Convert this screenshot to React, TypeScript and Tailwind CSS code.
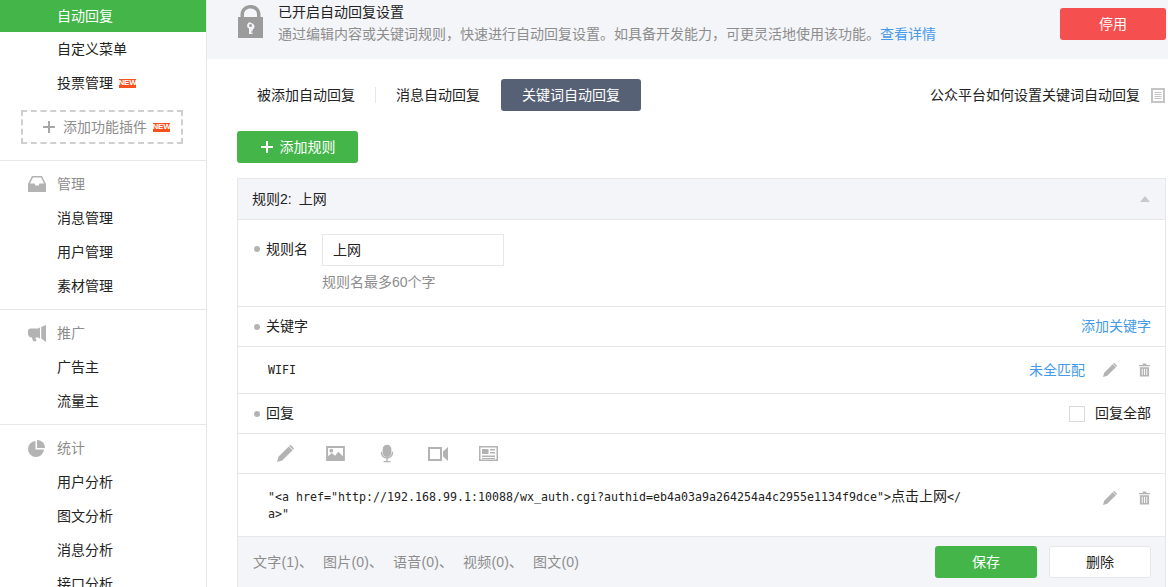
import type { ReactNode } from "react";

const cjk = "font-['Liberation_Sans','Noto_Sans_CJK_SC',sans-serif]";

function NewBadge() {
  return (
    <span className="ml-[6px] inline-flex h-[9px] w-[17px] items-center justify-center bg-[#f4511e] text-[8px] font-bold leading-none tracking-[-0.2px] text-white">
      NEW
    </span>
  );
}

function InboxIcon() {
  return (
    <svg width="18" height="16" viewBox="0 0 18 16" fill="#b3b3b3">
      <path d="M4 0h10l4 8v8H0V8zM5 1.500 2 7.600h4.500l1 2h3l1-2H16l-3-6.100z" fillRule="evenodd" />
    </svg>
  );
}

function MegaphoneIcon() {
  return (
    <svg width="18" height="17" viewBox="0 0 18 17" fill="#b3b3b3">
      <path d="M0 6c0-1.600 1.200-2.600 2.600-2.600H10l2-1v11.200l-2-1H7.400l1.200 3.600H5.200L3.800 12.600C1.600 12.400 0 10.800 0 9zM13.200 2 18 0v17l-4.800-3.400z" />
    </svg>
  );
}

function PieIcon() {
  return (
    <svg width="17" height="17" viewBox="0 0 17 17" fill="#b3b3b3">
      <path d="M7.500 1A8 8 0 1 0 16 9.500H7.500z" />
      <path d="M9 0a8 8 0 0 1 8 8H9z" />
    </svg>
  );
}

function LockIcon() {
  return (
    <svg width="25" height="33" viewBox="0 0 25 33" fill="#9b9b9b">
      <path
        fillRule="evenodd"
        d="M2.500 12V9.500C2.500 4 7 0 12.500 0S22.500 4 22.500 9.500V12H25v21H0V12zM6 12h13V9.500C19 5.800 16.200 3.500 12.500 3.500S6 5.800 6 9.500zM12.500 17a3.500 3.500 0 0 0-1.500 6.600V29h3.500v-1.500H13v-1h1.500v-1.900a3.500 3.500 0 0 0-2-6.600zm0 2a1.500 1.500 0 1 1 0 3 1.500 1.500 0 0 1 0-3z"
      />
    </svg>
  );
}

function PencilIcon({ size = 18 }: { size?: number }) {
  return (
    <svg width={size} height={size} viewBox="0 0 18 18" fill="#b3b3b3">
      <path d="M0 18l1.500-5.500L12.500 1.500l4 4L5.500 16.500zM13.500.5 14.500 0 18 3.500l-.5 1-.5.500-4-4z" />
    </svg>
  );
}

function TrashIcon() {
  return (
    <svg width="11" height="14" viewBox="0 0 12 14" fill="#b3b3b3">
      <path d="M4 0h4v1.500h4V3H0V1.500h4zM1 4h10v10H1zM3 5.500V12.500h1V5.500zM5.500 5.500V12.500h1V5.500zM8 5.500V12.500h1V5.500z" fillRule="evenodd" />
    </svg>
  );
}

function MenuItem({ children }: { children: ReactNode }) {
  return <div className="flex h-[34px] items-center pl-[57px] text-[#222]">{children}</div>;
}

function MenuGroup({ icon, title, items }: { icon: ReactNode; title: string; items: string[] }) {
  return (
    <div className="border-t border-[#e7e7eb] pt-[6px] pb-[6px]">
      <div className="flex h-[34px] items-center text-[#8d8d8d]">
        <span className="flex w-[57px] justify-start pl-[28px]">{icon}</span>
        {title}
      </div>
      {items.map((item) => (
        <MenuItem key={item}>{item}</MenuItem>
      ))}
    </div>
  );
}

function Sidebar() {
  return (
    <aside className="h-[587px] w-[207px] shrink-0 overflow-hidden border-r border-[#e7e7eb] bg-white">
      <div className="flex h-[32px] items-center bg-[#44b549] pl-[57px] text-white">自动回复</div>
      <MenuItem>自定义菜单</MenuItem>
      <MenuItem>
        投票管理
        <NewBadge />
      </MenuItem>
      <div className="mt-[10px] mr-[23px] mb-[16px] ml-[21px] flex h-[34px] items-center border-2 border-dashed border-[#cfcfcf] pl-[20px] text-[#8d8d8d]">
        <svg width="12" height="12" viewBox="0 0 12 12" fill="#a6a6a6" className="mr-[8px]">
          <path d="M5 0h2v5h5v2H7v5H5V7H0V5h5z" />
        </svg>
        添加功能插件
        <NewBadge />
      </div>
      <MenuGroup icon={<InboxIcon />} title="管理" items={["消息管理", "用户管理", "素材管理"]} />
      <MenuGroup icon={<MegaphoneIcon />} title="推广" items={["广告主", "流量主"]} />
      <MenuGroup icon={<PieIcon />} title="统计" items={["用户分析", "图文分析", "消息分析", "接口分析"]} />
    </aside>
  );
}

function Banner() {
  return (
    <div className="flex h-[59px] items-start bg-[#f4f5f9] pr-[2px] pl-[31px]">
      <div className="mt-[5px] mr-[15px]">
        <LockIcon />
      </div>
      <div className="flex-1 pt-[2px]">
        <div className="h-[22px] leading-[20px] text-[#222]">已开启自动回复设置</div>
        <div className="leading-[20px] text-[#8d8d8d]">
          通过编辑内容或关键词规则，快速进行自动回复设置。如具备开发能力，可更灵活地使用该功能。
          <span className="text-[#459ae9]">查看详情</span>
        </div>
      </div>
      <button className="mt-[8px] h-[32px] w-[106px] rounded-[3px] bg-[#f64f4f] text-white">停用</button>
    </div>
  );
}

function Tabs() {
  return (
    <div className="flex h-[32px] items-center pr-[3px] pl-[30px]">
      <span className="w-[138px] pl-[20px] text-[#222]">被添加自动回复</span>
      <span className="h-[16px] w-px bg-[#e7e7eb]" />
      <span className="w-[125px] pl-[20px] text-[#222]">消息自动回复</span>
      <span className="flex h-[32px] w-[140px] items-center justify-center rounded-[3px] bg-[#576175] text-white">
        关键词自动回复
      </span>
      <span className="ml-auto flex items-center text-[#222]">
        公众平台如何设置关键词自动回复
        <svg width="14" height="15" viewBox="0 0 14 15" fill="none" stroke="#c4c4c4" className="ml-[11px]">
          <rect x="1" y="1" width="12" height="13" strokeWidth="2" />
          <path d="M3.500 4.500h7M3.500 6.500h7M3.500 8.500h7M3.500 10.500h7" strokeWidth="1" />
        </svg>
      </span>
    </div>
  );
}

function Row({ className, children }: { className: string; children: ReactNode }) {
  return <div className={`flex border-b border-[#e7e7eb] pr-[14px] ${className}`}>{children}</div>;
}

function Label({ children }: { children: ReactNode }) {
  return (
    <span className="flex items-center text-[#222]">
      <span className="mr-[6px] h-[6px] w-[6px] rounded-full bg-[#b3b3b3]" />
      {children}
    </span>
  );
}

function RowActions() {
  return (
    <div className="flex items-center">
      <PencilIcon size={14} />
      <span className="mr-[1px] ml-[22px] flex">
        <TrashIcon />
      </span>
    </div>
  );
}

function ReplyTools() {
  return (
    <div className="flex items-center">
      <PencilIcon size={17} />
      <svg width="19" height="15" viewBox="0 0 20 16" fill="#b3b3b3" className="ml-[32px]">
        <path fillRule="evenodd" d="M0 0h20v16H0zM2 2v9l4-3.500 3.500 3L13 6l5 5V2zM5.500 3a2 2 0 1 1 0 4 2 2 0 0 1 0-4z" />
      </svg>
      <svg width="14" height="19" viewBox="0 0 16 20" fill="#b3b3b3" className="ml-[35px]">
        <rect x="3" y="0" width="10" height="14" rx="5" />
        <path d="M1 8v1.500C1 13 4 15.500 7.200 15.800V18.500H4V20h8v-1.500H8.800v-2.700C12 15.500 15 13 15 9.500V8h-1.500v1.500C13.500 12 11 14.300 8 14.300S2.500 12 2.500 9.500V8z" />
      </svg>
      <svg width="20" height="14" viewBox="0 0 20 14" fill="#b3b3b3" className="ml-[34px]">
        <path fillRule="evenodd" d="M0 0h14v14H0zM2 2v10h10V2zM15 4.500 20 0v14l-5-4.500z" />
      </svg>
      <svg width="19" height="15" viewBox="0 0 19 15" fill="#b3b3b3" className="ml-[31px]">
        <path fillRule="evenodd" d="M0 0h19v15H0zM1.500 1.500v12h16v-12zM3 3h6.500v5H3zM11 3h5v1.500h-5zM11 6h5v1.500h-5zM3 9.500h13V11H3zM3 12h13v1H3z" />
      </svg>
    </div>
  );
}

function ReplyCounts() {
  const counts = ["文字(1)、", "图片(0)、", "语音(0)、", "视频(0)、", "图文(0)"];
  return (
    <div className="flex">
      {counts.map((count) => (
        <span key={count} className="w-[70px] tracking-[0.2px]">
          {count}
        </span>
      ))}
    </div>
  );
}

function RulePanel() {
  return (
    <div className="mt-[15px] h-[420px] overflow-hidden border border-b-0 border-[#e7e7eb]">
      <div className="flex h-[41px] items-center justify-between border-b border-[#e7e7eb] bg-[#f4f5f9] px-[14px] text-[#222]">
        <span>
          规则2:<span className="ml-[7px]">上网</span>
        </span>
        <span className="mr-[1px] h-0 w-0 border-x-[5px] border-b-[6px] border-x-transparent border-b-[#c9c9c9]" />
      </div>
      <Row className="h-[87px] pt-[14px] pl-[16px]">
        <div className="flex h-[30px] items-center">
          <Label>规则名</Label>
        </div>
        <div className="ml-[14px]">
          <div className="flex h-[32px] w-[182px] items-center border border-[#e7e7eb] pl-[10px] text-[#222]">上网</div>
          <div className="mt-[6px] text-[#8d8d8d]">规则名最多60个字</div>
        </div>
      </Row>
      <Row className="h-[40px] items-center justify-between pl-[16px]">
        <Label>关键字</Label>
        <span className="text-[#459ae9]">添加关键字</span>
      </Row>
      <Row className="h-[47px] items-center pl-[30px]">
        <span className="pt-[2px] font-['DejaVu_Sans_Mono',monospace] text-[11.63px] text-[#222]">WIFI</span>
        <span className="mr-[18px] ml-auto text-[#459ae9]">未全匹配</span>
        <RowActions />
      </Row>
      <Row className="h-[40px] items-center justify-between pl-[16px]">
        <Label>回复</Label>
        <span className="flex items-center text-[#222]">
          <span className="mr-[10px] h-[16px] w-[16px] border border-[#d9dadc] bg-white" />
          回复全部
        </span>
      </Row>
      <Row className="h-[40px] items-center pl-[39px]">
        <ReplyTools />
      </Row>
      <Row className="h-[63px] items-start justify-between pt-[14px] pl-[30px]">
        <div className="font-['DejaVu_Sans_Mono','Noto_Sans_CJK_SC',monospace] text-[11.63px] leading-[17px] whitespace-nowrap text-[#222]">
          {'"<a href="http://192.168.99.1:10088/wx_auth.cgi?authid=eb4a03a9a264254a4c2955e1134f9dce">'}
          <span className="text-[14px]">点击上网</span>
          {"</"}
          <br />
          {'a>"'}
        </div>
        <div className="pt-[3px]">
          <RowActions />
        </div>
      </Row>
      <div className="flex h-[50px] items-center bg-[#f4f5f9] pr-[14px] pl-[15px] text-[#8d8d8d]">
        <ReplyCounts />
        <button className="mr-[12px] ml-auto h-[32px] w-[102px] rounded-[3px] bg-[#44b549] text-white">保存</button>
        <button className="h-[32px] w-[102px] rounded-[3px] border border-[#e7e7eb] bg-white text-[#222]">删除</button>
      </div>
    </div>
  );
}

export default function App() {
  return (
    <div className={`flex h-[587px] w-[1168px] overflow-hidden bg-white text-[14px] ${cjk}`}>
      <Sidebar />
      <main className="min-w-0 flex-1">
        <Banner />
        <div className="mt-[20px]">
          <Tabs />
        </div>
        <div className="pr-[2px] pl-[30px]">
          <button className="mt-[20px] flex h-[32px] w-[121px] items-center justify-center rounded-[3px] bg-[#44b549] pl-[1px] text-white">
            <svg width="12" height="12" viewBox="0 0 12 12" fill="#fff" className="mr-[7px]">
              <path d="M5 0h2v5h5v2H7v5H5V7H0V5h5z" />
            </svg>
            添加规则
          </button>
          <RulePanel />
        </div>
      </main>
    </div>
  );
}
